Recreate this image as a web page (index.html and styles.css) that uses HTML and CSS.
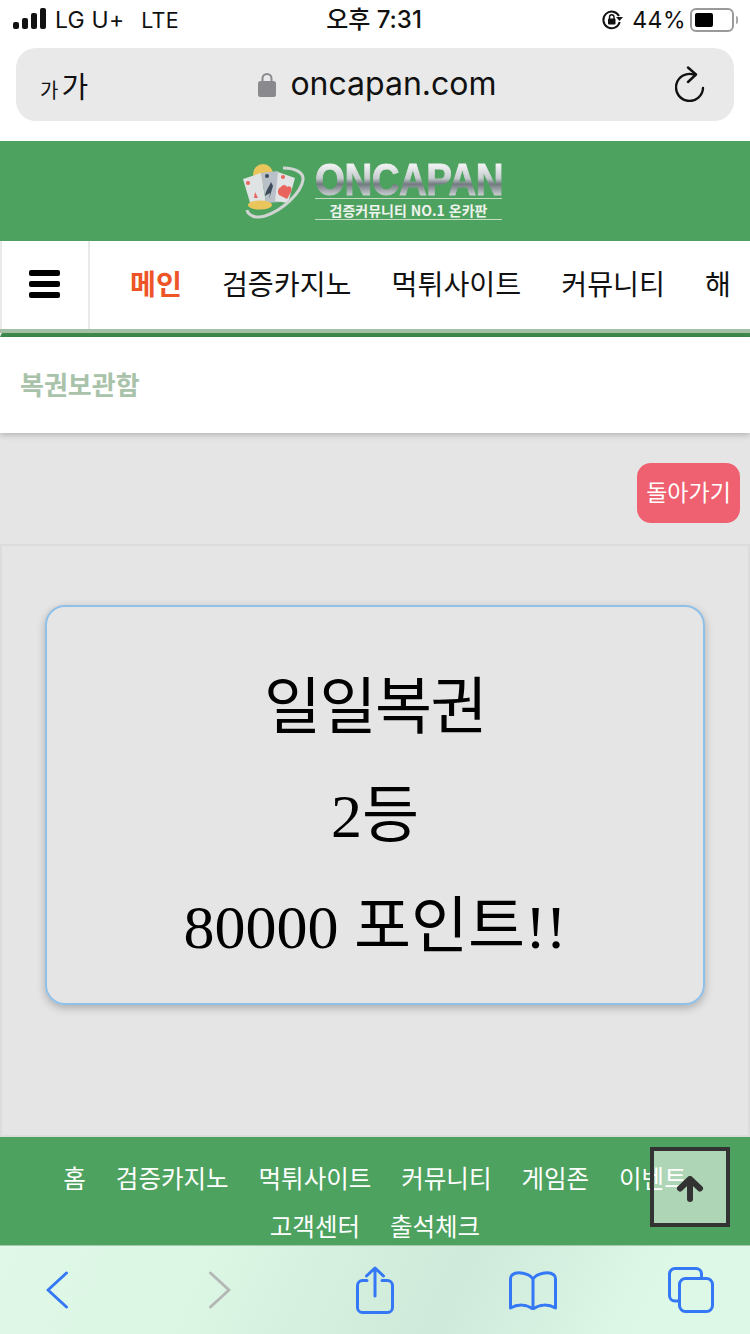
FILE: index.html
```html
<!DOCTYPE html>
<html lang="ko">
<head>
<meta charset="utf-8">
<title>ONCAPAN</title>
<link rel="stylesheet" href="styles.css">
</head>
<body>
<div class="page">
  <div class="status">
    <div class="status-left">
      <svg class="signal" width="34" height="22" viewBox="0 0 34 22"><rect x="0" y="14" width="6" height="7" rx="2"/><rect x="9" y="10" width="6" height="11" rx="2"/><rect x="18" y="5" width="6" height="16" rx="2"/><rect x="27" y="0" width="6" height="21" rx="2"/></svg>
      <span class="carrier">LG U+</span><span class="carrier net">LTE</span>
    </div>
    <div class="status-time">오후 7:31</div>
    <div class="status-right">
      <svg class="rotlock" width="22" height="22" viewBox="0 0 22 22"><path d="M18 7A8.300 8.300 0 1 0 18.700 13" fill="none" stroke="#111" stroke-width="2"/><path d="M15 8h7l-3.500 4z" fill="#111"/><rect x="7" y="9.500" width="7.500" height="6" rx="1" fill="#111"/><path d="M8.500 10V8a2.200 2.200 0 0 1 4.500 0v2" fill="none" stroke="#111" stroke-width="1.400"/></svg>
      <span class="pct">44%</span>
      <span class="battery"><span class="battery-fill"></span></span><span class="battery-tip"></span>
    </div>
  </div>
  <div class="urlwrap">
    <div class="urlbar">
      <span class="aa"><span class="aa-s">가</span><span class="aa-l">가</span></span>
      <span class="url">
        <svg width="18" height="26" viewBox="0 0 18 26"><path d="M4.500 11V7.500a4.500 4.500 0 0 1 9 0V11" fill="none" stroke="#8a8a8e" stroke-width="2"/><rect x="0" y="10" width="18" height="16" rx="2.500" fill="#8a8a8e"/></svg>
        <span>oncapan.com</span>
      </span>
      <svg class="reload" width="32" height="36" viewBox="0 0 32 36"><path d="M19 8.700A13.500 13.500 0 1 0 28 22" fill="none" stroke="#111" stroke-width="2.400" stroke-linecap="round"/><path d="M13 1.500L21 8.500 13 16" fill="none" stroke="#111" stroke-width="2.400" stroke-linecap="round" stroke-linejoin="round"/></svg>
    </div>
  </div>
  <header class="brand">
    <div class="logo">
      <svg class="logo-mark" width="62" height="56" viewBox="0 0 62 56">
        <circle cx="20" cy="10" r="10" fill="#e9c55c"/>
        <path d="M0 15L18 9l5 30-15 3z" fill="#dfe3e4"/>
        <path d="M18 9l17-2 2 31-14 1z" fill="#b9c0c8"/>
        <path d="M35 8l17 6-7 25-13-2z" fill="#e0e4e4"/>
        <ellipse cx="17" cy="41" rx="12" ry="4.500" fill="#e9c55c"/>
        <path d="M38 23c2-3 5-2 6 0 2-2 6 0 4 5l-4 7-8-4c-2-3-1-7 2-8z" fill="#e8645c"/>
        <path d="M28 18c-2 5-5 8-6 14l5-3-1 6 4-13z" fill="#3d4a5a"/>
        <circle cx="24" cy="12" r="2" fill="#3d4a5a"/>
        <circle cx="5" cy="19" r="2" fill="#e8645c"/>
        <circle cx="40" cy="13" r="2" fill="#e8645c"/>
        <path d="M12 28l-1 6 4 0z" fill="#e8645c"/>
        <path d="M40 4c13 0 21 5 20 12-2 13-20 30-38 36-10 3-17-1-18-6" fill="none" stroke="#d0d4d2" stroke-width="3"/>
      </svg>
      <div class="logo-text">
        <div class="logo-word"><span>ONCAPAN</span></div>
        <div class="logo-sub">검증커뮤니티 NO.1 온카판</div>
      </div>
    </div>
  </header>
  <nav class="topnav">
    <div class="burger"><span></span><span></span><span></span></div>
    <div class="topnav-items">
      <span class="active">메인</span><span>검증카지노</span><span>먹튀사이트</span><span>커뮤니티</span><span>해</span>
    </div>
  </nav>
  <div class="titlebar">복권보관함</div>
  <main class="content">
    <div class="back-row"><a class="back">돌아가기</a></div>
    <section class="panel">
      <div class="card">
        <p class="card-first">일일복권</p>
        <p>2등</p>
        <p>80000 포인트!!</p>
      </div>
    </section>
  </main>
  <footer class="foot">
    <div class="foot-row"><span>홈</span><span>검증카지노</span><span>먹튀사이트</span><span>커뮤니티</span><span>게임존</span><span>이벤트</span></div>
    <div class="foot-row"><span>고객센터</span><span>출석체크</span></div>
  </footer>
  <div class="totop">
    <svg width="28" height="26" viewBox="0 0 28 26"><path d="M14 23V4M4 12.500L14 3l10 9.500" fill="none" stroke="#333" stroke-width="6" stroke-linecap="round" stroke-linejoin="round"/></svg>
  </div>
  <div class="toolbar">
    <svg class="tb-back" width="24" height="38" viewBox="0 0 24 38"><path d="M21.500 2L3 19l18.500 17" fill="none" stroke="#3478f6" stroke-width="3" stroke-linecap="round" stroke-linejoin="round"/></svg>
    <svg class="tb-forward" width="24" height="38" viewBox="0 0 24 38"><path d="M2.500 2L21 19 2.500 36" fill="none" stroke="#b4b8b4" stroke-width="3" stroke-linecap="round" stroke-linejoin="round"/></svg>
    <svg width="38" height="48" viewBox="0 0 38 48"><path d="M11 14.500H6.500a5 5 0 0 0-5 5v22a5 5 0 0 0 5 5h25a5 5 0 0 0 5-5v-22a5 5 0 0 0-5-5H26" fill="none" stroke="#3478f6" stroke-width="3" stroke-linecap="round"/><path d="M19 30V2.500M10.500 10L19 2l8.500 8" fill="none" stroke="#3478f6" stroke-width="3" stroke-linecap="round" stroke-linejoin="round"/></svg>
    <svg width="48" height="40" viewBox="0 0 48 40"><path d="M24 9C20 3 8 1 3 5 2 6 1.500 7 1.500 9v29c7-4 16-4 22.500 1 6.500-5 15.500-5 22.500-1V9c0-2-.5-3-1.500-4-5-4-17-2-21 4zM24 9v30" fill="none" stroke="#3478f6" stroke-width="3" stroke-linejoin="round"/></svg>
    <svg width="46" height="46" viewBox="0 0 46 46"><path d="M11 34H7a5.500 5.500 0 0 1-5.500-5.500V7A5.500 5.500 0 0 1 7 1.500h21A5.500 5.500 0 0 1 33.500 7v4" fill="none" stroke="#3478f6" stroke-width="3"/><rect x="11.500" y="11.500" width="33" height="33" rx="6" fill="none" stroke="#3478f6" stroke-width="3"/></svg>
  </div>
</div>
</body>
</html>
```
FILE: styles.css
```css
* { box-sizing: border-box; }
html, body { margin: 0; padding: 0; }
body { background: #e5e5e5; font-family: "Noto Sans CJK KR", "Noto Sans", sans-serif; }
.page { position: relative; width: 750px; height: 1334px; overflow: hidden; display: flex; flex-direction: column; background: #e5e5e5; }

.status { height: 48px; background: #fff; display: flex; justify-content: space-between; align-items: flex-start; padding: 0 12px 0 13px; position: relative; color: #111; font-family: Inter, "Noto Sans CJK KR", sans-serif; font-size: 23px; }
.status-left { display: flex; align-items: center; height: 40px; }
.signal { fill: #111; margin-right: 8px; margin-top: -3px; }
.carrier { font-size: 23px; letter-spacing: .2px; }
.net { margin-left: 17px; font-size: 21.500px; }
.status-time { position: absolute; left: 0; right: 2px; top: 0; height: 40px; line-height: 40px; text-align: center; font-weight: 500; font-size: 24px; }
.status-right { display: flex; align-items: center; height: 40px; }
.rotlock { margin-right: 9px; margin-top: -1px; }
.pct { font-size: 23px; letter-spacing: .5px; margin-right: 4px; }
.battery { width: 44px; height: 24px; border: 2px solid #9a9a9a; border-radius: 6px; padding: 3px; display: flex; }
.battery-fill { width: 18px; background: #000; border-radius: 2px; }
.battery-tip { width: 2px; height: 8px; background: #aaa; margin-left: 2px; border-radius: 0 2px 2px 0; }

.urlwrap { height: 93px; background: #fff; padding: 0 16px; }
.urlbar { height: 73px; background: #e9e9e9; border-radius: 20px; display: flex; align-items: center; justify-content: space-between; padding: 0 27px 0 24px; }
.aa { display: flex; align-items: baseline; gap: 3px; color: #111; width: 60px; }
.aa-s { font-size: 20px; }
.aa-l { font-size: 29px; }
.url { display: flex; align-items: center; gap: 14px; font-family: Inter, sans-serif; font-size: 32px; color: #111; margin-left: -20px; margin-top: -2px; }
.reload { margin-top: -1px; }

.brand { height: 100px; background: #4ea260; display: flex; align-items: center; justify-content: center; }
.logo { display: flex; align-items: center; gap: 10px; margin-left: -5px; }
.logo-mark { margin-top: 1px; }
.logo-text { display: flex; flex-direction: column; width: 187px; }
.logo-word { height: 36px; border-bottom: 1px solid #c4dcc4; margin-bottom: 2px; }
.logo-word span { display: block; width: max-content; transform: scaleX(.875); transform-origin: left top; font-family: "Liberation Sans", sans-serif; font-weight: 700; font-size: 44px; line-height: 34px; height: 34px; letter-spacing: -.6px; white-space: nowrap; background: linear-gradient(#f6f7f7 0%, #c6cbce 45%, #717a80 62%, #d7dbdd 100%); -webkit-background-clip: text; background-clip: text; color: transparent; -webkit-text-stroke: 1px transparent; }
.logo-sub { font-size: 14px; line-height: 18px; font-weight: 700; color: #eef3ee; text-align: center; white-space: nowrap; border-bottom: 1px solid #c4dcc4; }

.topnav { height: 96px; background: #fff; display: flex; border-bottom: 4px solid #3f8a4c; position: relative; padding: 0 2px; box-shadow: 0 4px 6px rgba(0,0,0,.08); border-left: 2px solid #e9e9e9; }
.topnav::after { content: ""; position: absolute; left: -2px; right: 0; bottom: 0; height: 4px; background: #a3bfa6; }
.burger { width: 88px; margin-left: -2px; border-right: 2px solid #e9e9e9; display: flex; flex-direction: column; justify-content: center; align-items: center; gap: 5px; padding: 0 2px 6px 0; }
.burger span { width: 31px; height: 6px; border-radius: 2px; background: #000; }
.topnav-items { flex: 1; display: flex; gap: 40px; align-items: center; padding: 0 0 9px 40px; font-size: 28.200px; color: #111; white-space: nowrap; overflow: hidden; }
.active { color: #ee5526; font-weight: 700; }

.titlebar { height: 96px; background: #fff; padding-left: 20px; line-height: 93px; font-size: 26px; font-weight: 700; color: #a9c2aa; box-shadow: 0 2px 6px rgba(0,0,0,.22); position: relative; }

.content { flex: 1; display: flex; flex-direction: column; }
.back-row { height: 111px; display: flex; justify-content: flex-end; padding: 30px 10px 0 0; }
.back { width: 103px; height: 60px; background: #ef6070; border-radius: 14px; color: #fff; font-size: 23px; line-height: 56px; text-align: center; }
.panel { flex: 1; border: 2px solid #dcdcdc; padding: 59px 43px 0; }
.card { width: 660px; height: 400px; border: 2px solid #8fc0e8; border-radius: 20px; box-shadow: 0 3px 8px rgba(0,0,0,.25); display: flex; flex-direction: column; align-items: center; padding-top: 43px; font-family: "Liberation Serif", "Noto Sans CJK KR", serif; font-size: 62px; color: #000; line-height: 111px; }
.card p { margin: 0; height: 111px; white-space: nowrap; }
.card p.card-first { letter-spacing: -1.500px; line-height: 116px; }

.foot { height: 108px; background: #4ea260; color: #fff; font-size: 24.500px; padding-top: 23px; }
.foot-row { display: flex; justify-content: center; gap: 30px; height: 48px; line-height: 36px; white-space: nowrap; }

.totop { position: absolute; left: 650px; top: 1147px; width: 80px; height: 80px; border: 4px solid #333; background: rgba(255,255,255,.55); display: flex; align-items: center; justify-content: center; }
.totop svg { margin-top: 4px; }

.toolbar { height: 89px; background: linear-gradient(115deg, #dff8e7 0%, #dcf6e4 28%, #cfe9da 60%, #ddf8e7 85%); border-top: 1px solid #a8c8ae; display: grid; grid-template-columns: repeat(5, 158px); justify-content: center; justify-items: center; align-items: center; }
.tb-back { margin-right: 4px; }
.tb-forward { margin-left: 6px; }
```
